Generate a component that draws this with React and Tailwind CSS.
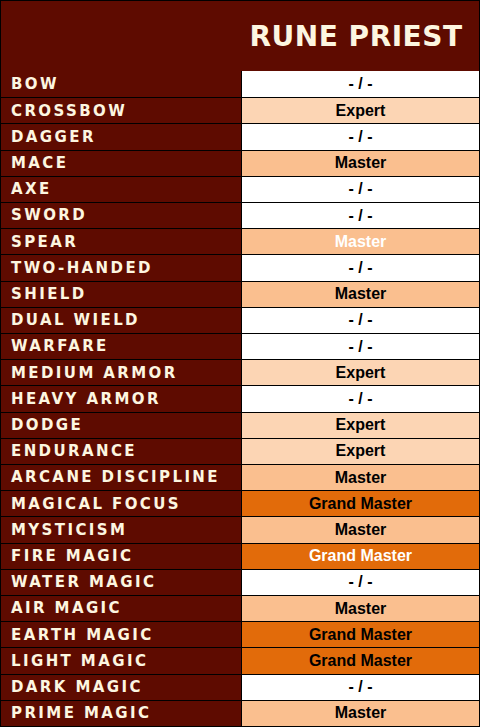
const rows = [
  ["BOW", "-"],
  ["CROSSBOW", "E"],
  ["DAGGER", "-"],
  ["MACE", "M"],
  ["AXE", "-"],
  ["SWORD", "-"],
  ["SPEAR", "Mw"],
  ["TWO-HANDED", "-"],
  ["SHIELD", "M"],
  ["DUAL WIELD", "-"],
  ["WARFARE", "-"],
  ["MEDIUM ARMOR", "E"],
  ["HEAVY ARMOR", "-"],
  ["DODGE", "E"],
  ["ENDURANCE", "E"],
  ["ARCANE DISCIPLINE", "M"],
  ["MAGICAL FOCUS", "G"],
  ["MYSTICISM", "M"],
  ["FIRE MAGIC", "Gw"],
  ["WATER MAGIC", "-"],
  ["AIR MAGIC", "M"],
  ["EARTH MAGIC", "G"],
  ["LIGHT MAGIC", "G"],
  ["DARK MAGIC", "-"],
  ["PRIME MAGIC", "M"],
];

const levels = {
  "-": { label: "- / -", cls: "bg-white text-black" },
  E: { label: "Expert", cls: "bg-[#fcd5b4] text-black" },
  M: { label: "Master", cls: "bg-[#fabf8f] text-black" },
  Mw: { label: "Master", cls: "bg-[#fabf8f] text-white" },
  G: { label: "Grand Master", cls: "bg-[#e26b0a] text-black" },
  Gw: { label: "Grand Master", cls: "bg-[#e26b0a] text-white" },
};

const App = () => {
  return (
    <div className="w-[480px] h-[727px] border border-black bg-[#5e0b00] flex flex-col">
      <div className="h-[70px] flex shrink-0">
        <div className="w-[240px]" />
        <div className="flex-1 flex items-center justify-center pr-[8px] pt-[2px]">
          <h1 className="font-['DejaVu_Sans',sans-serif] font-bold text-[28px] text-[#fdf6e0] tracking-[0.5px]">
            RUNE PRIEST
          </h1>
        </div>
      </div>

      <div className="flex-1 grid grid-rows-[repeat(25,1fr)]">
        {rows.map(([skill, lvl], i) => {
          const l = levels[lvl];
          return (
            <div
              key={skill}
              className={`grid grid-cols-[240px_1fr] ${i > 0 ? "border-t border-black" : ""}`}
            >
              <div className="flex items-center pl-[10px] font-['DejaVu_Sans',sans-serif] font-bold text-[15px] tracking-[2.4px] text-[#fdf6e0] whitespace-nowrap">
                {skill}
              </div>
              <div
                className={`border-l border-black flex items-center justify-center font-['Liberation_Sans',sans-serif] font-bold text-[16px] ${l.cls}`}
              >
                {l.label}
              </div>
            </div>
          );
        })}
      </div>
    </div>
  );
};

export default App;
